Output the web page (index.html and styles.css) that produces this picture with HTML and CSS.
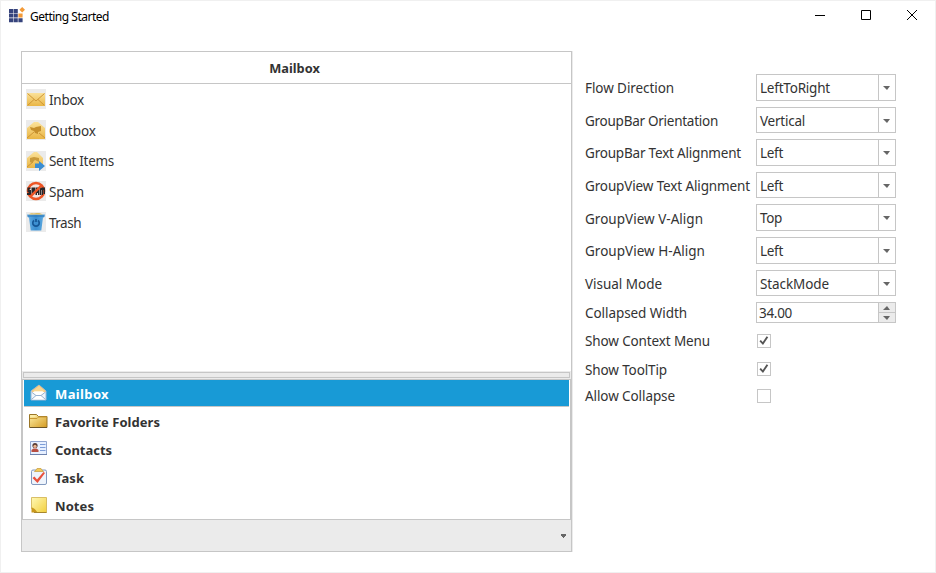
FILE: index.html
```html
<!DOCTYPE html>
<html lang="en">
<head>
<meta charset="utf-8">
<title>Getting Started</title>
<link rel="stylesheet" href="styles.css">
</head>
<body>
<svg width="0" height="0" class="defs" aria-hidden="true">
  <defs>
    <linearGradient id="gold" x2="0" y2="1"><stop offset="0" stop-color="#fbe29a"/><stop offset="1" stop-color="#e9b544"/></linearGradient>
    <linearGradient id="folder" x2="1" y2="1"><stop offset="0" stop-color="#fff0a8"/><stop offset="1" stop-color="#d39a21"/></linearGradient>
    <linearGradient id="note" x2="1" y2="1"><stop offset="0" stop-color="#fff9b5"/><stop offset="1" stop-color="#f2cf3d"/></linearGradient>
    <linearGradient id="bin" x2="1"><stop offset="0" stop-color="#68b1e6"/><stop offset=".5" stop-color="#398dd0"/><stop offset="1" stop-color="#63aee2"/></linearGradient>
  </defs>
</svg>
<div class="window">
  <header class="titlebar">
    <svg class="logo" width="16" height="16" viewBox="0 0 16 16"><path fill="#36437c" d="M0 2h4.300v4H0zM4.800 2h4v4h-4zM0 6.600h4.300v4H0zM4.800 6.600h4v4h-4zM0 11.200h4.300v4H0zM4.800 11.200h4v4h-4zM9.400 11.200h4.200v4H9.400z"/><path fill="#f39a38" d="M9.400 6.600h4.200v4H9.400zM13.200 0l2.800 2.700-2.800 2.700-2.800-2.700z"/></svg>
    <span class="caption">Getting Started</span>
    <div class="controls">
      <svg width="10" height="10" viewBox="0 0 10 10"><path d="M0 5.500h10"/></svg>
      <svg width="10" height="10" viewBox="0 0 10 10"><path d="M.5.5h9v9h-9z"/></svg>
      <svg width="10" height="10" viewBox="0 0 10 10"><path d="M0 0l10 10M10 0L0 10"/></svg>
    </div>
  </header>
  <main>
    <section class="groupbar">
      <h1>Mailbox</h1>
      <ul class="items">
        <li><svg class="tile" width="20" height="20" viewBox="0 0 20 20"><rect x="1" y="4" width="18" height="13" rx="1" fill="url(#gold)"/><path d="M1.500 16.500L8 10.500M18.500 16.500L12 10.500M1.500 4.500l8.500 7.500 8.500-7.500" fill="none" stroke="#cf9634"/></svg><span style="width:35px">Inbox</span></li>
        <li><svg class="tile" width="20" height="20" viewBox="0 0 20 20"><path d="M1 8l7-6h4l7 6v11H1z" fill="url(#gold)"/><path d="M4 7l4 1 2-1 5-1v5l-3 1v2l-3-1-1-2-3-1z" fill="#c58f2c"/><path d="M1 18l7-6M19 18l-6-5" stroke="#cf9634"/></svg><span style="width:47px">Outbox</span></li>
        <li><svg class="tile" width="20" height="20" viewBox="0 0 20 20"><path d="M1 7l7-6h3l6 6v10H1z" fill="url(#gold)"/><path d="M4 7l4-1 5 1v4l-4-2-3 3-2-1z" fill="#c99a3b"/><path d="M1 16l6-5" stroke="#cf9634"/><path d="M9 12.500h4V10l6 5-6 5v-3H9z" fill="#3a8dd2"/></svg><span style="width:65px">Sent Items</span></li>
        <li><svg class="tile" width="20" height="20" viewBox="0 0 20 20"><circle cx="10" cy="10" r="8" fill="#f4e3de" stroke="#ed5525" stroke-width="2.600"/><path d="M1.500 6.500h3v1.500h-1v1h1.500v5h-4v-2h1.500v-1H1.500zM5.500 6.500H9v5H7.500v2.500h-2zM9.500 6.500h4V14H12v-2h-1v2H9.500zM14 6.500h5V13h-1.500V9H17v5h-1.500V9H15v5h-1z" fill="#27272a"/><path d="M15.700 4.300L4.300 15.700" stroke="#ed5525" stroke-width="2.400"/></svg><span style="width:35px">Spam</span></li>
        <li><svg class="tile" width="20" height="20" viewBox="0 0 20 20"><path d="M1 2.500h18l-1 3h-1l-1.700 13H4.700L3 5.500H2z" fill="url(#bin)"/><path d="M3 2.500c2-2 4-.8 6-1.200 3-.8 6-.4 8 1.200z" fill="#dfbd61"/><path d="M1.500 4h17" stroke="#2a74b6"/><path d="M8 8.500a3.200 3.200 0 1 0 4 0M10 7v3" fill="none" stroke="#165797" stroke-width="1.700"/></svg><span style="width:32px">Trash</span></li>
      </ul>
      <div class="stack">
        <div class="splitter"></div>
        <ul class="groups">
          <li class="active"><svg width="20" height="20" viewBox="0 0 20 20"><path d="M2 8l8-6 7 6v9H2z" fill="#edf4fb" stroke="#9cb6d3"/><path d="M3 8l7-5.500L16.500 8 14 11H5z" fill="#f9d692" stroke="#eeb96b" stroke-width=".7"/><path d="M5 8h9l-1 4H6z" fill="#fff5dc"/><path d="M2.500 9l4.500 3.500h5L16.500 9M2.500 16.500l4.500-4h5l4.500 4" fill="#fff" stroke="#98b3d2"/></svg><span style="width:54px">Mailbox</span></li>
          <li><svg width="20" height="20" viewBox="0 0 20 20"><path d="M.5 3.500h7l2 2h8.500v11H.5z" fill="url(#folder)" stroke="#9b7627"/><path d="M1 7.500h7l1.500-1.500H18" fill="none" stroke="#c99833"/><path d="M1.500 5h5" stroke="#fff4bb"/><path d="M1 16.500h17" stroke="#6b5528"/></svg><span style="width:105px">Favorite Folders</span></li>
          <li><svg width="20" height="20" viewBox="0 0 20 20"><path d="M1.500 2.500h16v13h-16z" fill="#e7f0ff" stroke="#91a6d0"/><path d="M1 15.500h17" stroke="#6d82ad"/><circle cx="6" cy="6.500" r="2.600" fill="#593b34"/><circle cx="6" cy="7.300" r="1.600" fill="#ebb491"/><path d="M2.500 13v-2l2-1.500h3l2 1.500v2z" fill="#b84e41"/><path d="M11 5.500h5.500M11 8.500h5.500M11 11.500h5.500" stroke="#7d9dd8"/></svg><span style="width:57px">Contacts</span></li>
          <li><svg width="20" height="20" viewBox="0 0 20 20"><rect x="2.500" y="3" width="15" height="14.500" rx="1.500" fill="#eef4fc" stroke="#8299bf"/><path d="M5.500 4.500C6 3 7.500 3.500 8 1.500h4c.5 2 2 1.500 2.500 3z" fill="#f3cb58" stroke="#c49a3b" stroke-width=".7"/><path d="M3.500 11l2-1.500 2.500 3L14.500 5l1.500 1L8.500 16z" fill="#e9513d"/></svg><span style="width:29px">Task</span></li>
          <li><svg width="20" height="20" viewBox="0 0 20 20"><path d="M2.500 2.500h15v15h-11l-4-4z" fill="url(#note)" stroke="#cfb04c" stroke-width=".8"/><path d="M2.500 12.500c3 .5 4 2.500 6 5h-6z" fill="#c9981c"/><path d="M5 17.500h12.500" stroke="#a7862e"/></svg><span style="width:39px">Notes</span></li>
        </ul>
        <div class="overflow"><svg width="5" height="4" viewBox="0 0 5 4"><path d="M0 0h5v2H4v1H3v1H2V3H1V2H0z" fill="#666"/></svg></div>
      </div>
    </section>
    <section class="options">
      <div class="row tall"><label style="width:89px">Flow Direction</label><div class="combo"><span style="width:70px">LeftToRight</span><i></i></div></div>
      <div class="row"><label style="width:133px">GroupBar Orientation</label><div class="combo short"><span style="width:45px">Vertical</span><i></i></div></div>
      <div class="row tall"><label style="width:156px">GroupBar Text Alignment</label><div class="combo"><span style="width:23px">Left</span><i></i></div></div>
      <div class="row"><label style="width:165px">GroupView Text Alignment</label><div class="combo short"><span style="width:23px">Left</span><i></i></div></div>
      <div class="row tall"><label class="drop" style="width:118px">GroupView V-Align</label><div class="combo"><span style="width:22px">Top</span><i></i></div></div>
      <div class="row tall"><label style="width:120px">GroupView H-Align</label><div class="combo"><span style="width:23px">Left</span><i></i></div></div>
      <div class="row"><label style="width:77px">Visual Mode</label><div class="combo short"><span style="width:69px">StackMode</span><i></i></div></div>
      <div class="row spinrow"><label style="width:102px">Collapsed Width</label><div class="spin"><span style="width:33px">34.00</span><div class="buttons"><b class="up"></b><b></b></div></div></div>
      <div class="row checkrow"><label style="width:125px">Show Context Menu</label><svg class="check" width="14" height="14" viewBox="0 0 14 14"><path d="M2.500 6.500l3.200 3.500 5.300-8" /></svg></div>
      <div class="row checkrow low"><label style="width:82px">Show ToolTip</label><svg class="check" width="14" height="14" viewBox="0 0 14 14"><path d="M2.500 6.500l3.200 3.500 5.300-8" /></svg></div>
      <div class="row checkrow"><label style="width:90px">Allow Collapse</label><svg class="check" width="14" height="14" viewBox="0 0 14 14"></svg></div>
    </section>
  </main>
</div>
<script src="fit.js"></script>
</body>
</html>
```
FILE: styles.css
```css
*, *::before { box-sizing: border-box; }
body { margin: 0; background: #fff; color: #333; font: 13.5px/20px "Noto Sans", "Open Sans", sans-serif; }
ul, h1 { margin: 0; padding: 0; list-style: none; }
svg { display: block; flex: none; }
.defs { position: absolute; }
.window { width: 936px; height: 573px; border: 1px solid #f0f0f0; overflow: hidden; }
.titlebar { display: flex; height: 50px; padding: 6px 18px 0 8px; }
.caption { width: 79px; margin-left: 5px; padding-top: 1px; color: #000; font: 12px/18px "Noto Sans", sans-serif; white-space: nowrap; }
.controls { display: flex; gap: 36px; margin: 3px 0 0 auto; }
.controls path { fill: none; stroke: #000; }
.controls svg { overflow: visible; }
main { display: flex; padding-left: 20px; }
.groupbar { display: flex; flex-direction: column; width: 551px; height: 501px; border: 1px solid #c6c6c6; box-shadow: 1px 0 #ebebeb; }
h1 { height: 32px; border-bottom: 1px solid #c6c6c6; padding-right: 4px; text-align: center; font-size: 12.8px; line-height: 32px; color: #333; }
.items { flex: 1; padding: 5px 0 0 4px; }
.items li { display: flex; align-items: center; height: 20px; margin-bottom: 10.750px; }
.items li:nth-child(3) span { padding-top: 1px; }
.items span { margin-left: 3px; padding-top: 2px; white-space: nowrap; }
.tile { background: #ebebeb; }
.stack { height: 180px; background: #ebebeb; padding-top: 1px; }
.splitter { height: 6px; margin: 0 1px 1px 1px; border: 1px solid #c6c6c6; }
.groups { height: 141px; border: 1px solid #c6c6c6; background: #fff; font-weight: 700; font-size: 13px; }
.groups li { display: flex; align-items: center; height: 28px; padding-left: 6px; }
.groups .active { margin: 0 1px 1px 1px; padding-left: 5px; background: #189ad6; color: #fff; height: 26px; box-shadow: 0 1px #c6c6c6; }
.groups span { margin-left: 6px; padding-top: 2px; white-space: nowrap; }
.overflow { display: flex; justify-content: flex-end; padding: 14px 5px 0; }
.options { width: 311px; margin: 23px 0 0 13px; }
.row { display: flex; justify-content: space-between; height: 32px; }
.row.tall { height: 33px; }
label { margin-top: 4px; white-space: nowrap; }
.row .drop { margin-top: 5px; }
.combo { display: grid; grid-template: 100% / 1fr 17px; width: 140px; height: 27px; border: 1px solid #c6c6c6; line-height: 26px; }
.combo.short { height: 26px; }
.combo span { margin-left: 3px; white-space: nowrap; }
.combo i { border-left: 1px solid #c6c6c6; }
.combo i::before { content: ""; display: block; margin: 11px 4px 0; width: 7px; border: solid transparent; border-width: 4px 3.500px 0; border-width: 4px 3px 0 4px; border-top-color: #666; }
.spinrow { height: 32px; }
.spinrow label { margin-top: 1px; }
.spin { display: flex; justify-content: space-between; width: 140px; height: 21px; border: 1px solid #c6c6c6; line-height: 21px; }
.spin span { margin-left: 2px; white-space: nowrap; }
.buttons { width: 17px; background: #ebebeb; border-left: 1px solid #c6c6c6; }
.buttons b { display: block; height: 9px; padding: 3px 4px 0; }
.buttons b.up { height: 10px; border-bottom: 1px solid #c6c6c6; }
.buttons b::before { content: ""; display: block; width: 7px; border: solid transparent; border-width: 4px 3px 0 4px; border-top-color: #666; }
.buttons b.up::before { border-width: 0 3px 4px 4px; border-color: transparent transparent #666; }
.checkrow { height: 28px; }
.checkrow.low { height: 27px; }
.checkrow label { margin-top: -3px; }
.checkrow.low label { margin-top: -2px; }
.check { margin-right: 125px; border: 1px solid #c6c6c6; }
.check path { fill: none; stroke: #555; stroke-width: 2.2; }
```
FILE: fit.js
```js
// Spread each caption's letters evenly over its column width.
document.querySelectorAll("label, span").forEach(function (el) {
  var width = el.getBoundingClientRect().width;
  var range = document.createRange();
  range.selectNodeContents(el);
  var natural = range.getBoundingClientRect().width;
  el.style.letterSpacing = (width - natural) / el.textContent.length + "px";
});
```
